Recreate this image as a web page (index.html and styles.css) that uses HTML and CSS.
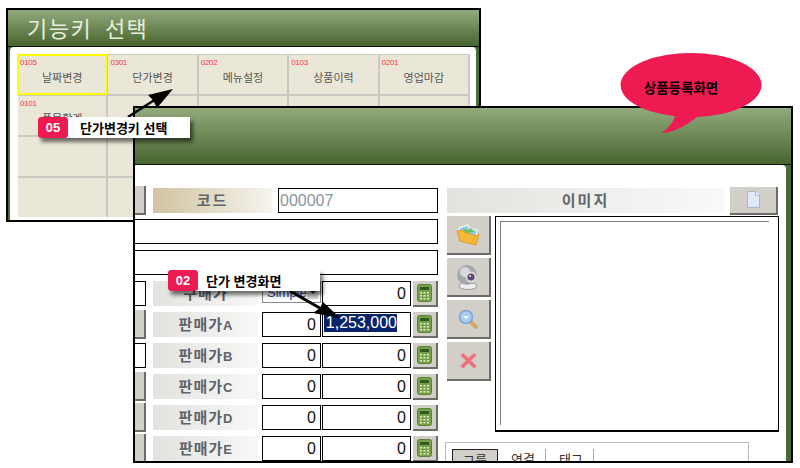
FILE: index.html
```html
<!DOCTYPE html>
<html lang="ko">
<head>
    <meta charset="utf-8">
    <title>단가 변경</title>
    <link rel="stylesheet" href="styles.css">
</head>
<body>
    <svg width="0" height="0" class="defs">
        <symbol id="calc" viewBox="0 0 15 18">
            <rect x="0.5" y="0.5" width="14" height="17" rx="2" fill="#76a04c" stroke="#5c8038"/>
            <rect x="3" y="3" width="9" height="3" fill="#2f5a22"/>
            <path d="M3 8h2v1.6H3zM6.5 8h2v1.6h-2zM10 8h2v1.6h-2zM3 11h2v1.6H3zM6.5 11h2v1.6h-2zM10 11h2v1.6h-2zM3 14h2v1.6H3zM6.5 14h2v1.6h-2zM10 14h2v1.6h-2z" fill="#e2ecc4"/>
        </symbol>
    </svg>

    <!-- 뒤쪽 창 -->
    <div class="window back">
        <div class="win-head"><span class="win-title">기능키 선택</span></div>
        <div class="win-card">
            <div class="key-grid">
                <div class="key-cell on"><span class="key-code">0105</span><span class="key-name">날짜변경</span></div>
                <div class="key-cell"><span class="key-code">0301</span><span class="key-name">단가변경</span></div>
                <div class="key-cell"><span class="key-code">0202</span><span class="key-name">메뉴설정</span></div>
                <div class="key-cell"><span class="key-code">0103</span><span class="key-name">상품이력</span></div>
                <div class="key-cell"><span class="key-code">0201</span><span class="key-name">영업마감</span></div>
                <div class="key-cell"><span class="key-code">0101</span><span class="key-name">품목합계</span></div>
                <div class="key-cell"></div><div class="key-cell"></div><div class="key-cell"></div><div class="key-cell"></div>
                <div class="key-cell"></div><div class="key-cell"></div><div class="key-cell"></div><div class="key-cell"></div><div class="key-cell"></div>
                <div class="key-cell"></div><div class="key-cell"></div><div class="key-cell"></div><div class="key-cell"></div><div class="key-cell"></div>
            </div>
        </div>
    </div>

    <!-- 상품등록 창 -->
    <div class="window front">
        <div class="win-head front-head"></div>
        <div class="win-card front-card">
            <div class="form-col">
                <div class="row">
                    <div class="stub btn"></div>
                    <div class="lbl lbl-code">코드</div>
                    <div class="box code-box">000007</div>
                </div>
                <div class="row"><div class="box full"></div></div>
                <div class="row"><div class="box full"></div></div>
                <div class="row">
                    <div class="stub box"></div>
                    <div class="lbl lbl-price">구매가</div>
                    <div class="select-box"><span>Simple</span><i class="select-arrow"></i></div>
                    <div class="box val">0</div>
                    <div class="calc btn"><svg width="15" height="18"><use href="#calc"/></svg></div>
                </div>
                <div class="row">
                    <div class="stub btn"></div>
                    <div class="lbl lbl-price">판매가<b>A</b></div>
                    <div class="box num">0</div>
                    <div class="box val"><span class="picked">1,253,000</span></div>
                    <div class="calc btn"><svg width="15" height="18"><use href="#calc"/></svg></div>
                </div>
                <div class="row">
                    <div class="stub box"></div>
                    <div class="lbl lbl-price">판매가<b>B</b></div>
                    <div class="box num">0</div>
                    <div class="box val">0</div>
                    <div class="calc btn"><svg width="15" height="18"><use href="#calc"/></svg></div>
                </div>
                <div class="row">
                    <div class="stub btn"></div>
                    <div class="lbl lbl-price">판매가<b>C</b></div>
                    <div class="box num">0</div>
                    <div class="box val">0</div>
                    <div class="calc btn"><svg width="15" height="18"><use href="#calc"/></svg></div>
                </div>
                <div class="row">
                    <div class="stub btn"></div>
                    <div class="lbl lbl-price">판매가<b>D</b></div>
                    <div class="box num">0</div>
                    <div class="box val">0</div>
                    <div class="calc btn"><svg width="15" height="18"><use href="#calc"/></svg></div>
                </div>
                <div class="row">
                    <div class="stub btn"></div>
                    <div class="lbl lbl-price">판매가<b>E</b></div>
                    <div class="box num">0</div>
                    <div class="box val">0</div>
                    <div class="calc btn"><svg width="15" height="18"><use href="#calc"/></svg></div>
                </div>
            </div>

            <div class="image-col">
                <div class="row">
                    <div class="lbl lbl-image">이미지</div>
                    <div class="doc-btn btn">
                        <svg width="13" height="17" viewBox="0 0 13 17"><path d="M.5.5h8l4 4v12H.5z" fill="#dfe9fb" stroke="#a9b6d6"/><path d="M8.5.5v4h4" fill="#f6f8fd" stroke="#a9b6d6"/></svg>
                    </div>
                </div>
                <div class="image-area">
                    <div class="tool-col">
                        <div class="tool btn">
                            <svg width="24" height="24" viewBox="0 0 24 24"><path d="M3 5l9-3 1 3 8 2-1 9H5z" fill="#8fd0e8" stroke="#fff"/><path d="M7 5l5 2 3-2 3 4-9 1z" fill="#6fbf6a"/><path d="M1 8l5-1 2 2 12 4 3-2-3 11L4 18z" fill="#f5b93a" stroke="#e09a22"/></svg>
                        </div>
                        <div class="tool btn">
                            <svg width="24" height="26" viewBox="0 0 24 26"><ellipse cx="12" cy="22" rx="9" ry="3.5" fill="#eee" stroke="#999"/><circle cx="11" cy="11" r="10" fill="#a6a8ab"/><circle cx="9" cy="8" r="5" fill="#d8d9da"/><circle cx="15" cy="13" r="5.5" fill="#ddd"/><circle cx="15" cy="13" r="3.6" fill="#5e4a72"/><circle cx="14" cy="12" r="1" fill="#e8d8f0"/></svg>
                        </div>
                        <div class="tool btn">
                            <svg width="20" height="20" viewBox="0 0 20 20"><path d="M12 12l6 6" stroke="#d5a868" stroke-width="4" stroke-linecap="round"/><circle cx="8" cy="8" r="6.5" fill="#a9cdf0" stroke="#7fa5d0" stroke-width="1.6"/><path d="M5 7l3 3 3-3z" fill="#fff"/></svg>
                        </div>
                        <div class="tool btn">
                            <svg width="17" height="17" viewBox="0 0 17 17"><path d="M3 1l5.500 5L14 1l2.500 2.500L11 8.500l5.500 5.500L14 16.500l-5.500-5.500L3 16.500.5 14 6 8.500.5 3.500z" fill="#ee6f7a" stroke="#d9a0a4" stroke-width=".6"/></svg>
                        </div>
                    </div>
                    <div class="image-box"><div class="image-inner"></div></div>
                </div>
                <div class="tab-panel">
                    <span class="tab active">그룹</span>
                    <span class="tab">연결</span>
                    <span class="tab">태그</span>
                </div>
            </div>
        </div>
    </div>

    <svg class="arrows" width="800" height="468" viewBox="0 0 800 468">
        <path d="M128 117L156 99" stroke="#000" stroke-width="2.500"/>
        <path d="M173 89L148 95 153 100 157 108z" fill="#000"/>
        <path d="M290 291L325 311" stroke="#000" stroke-width="3"/>
        <path d="M340 318L323 302 320 308 313 313z" fill="#000"/>
    </svg>

    <div class="callout call-05"><span class="pill">05</span><span class="call-text">단가변경키 선택</span></div>
    <div class="callout call-02"><span class="pill">02</span><span class="call-text">단가 변경화면</span></div>

    <div class="bubble">
        <svg width="142" height="84" viewBox="0 0 142 84"><path d="M71 1A70 32 0 0 1 77 64.900C68 72 56 80 41 81 48 77 53 71 55 64.200A70 32 0 0 1 71 1z" fill="#ee1a52"/></svg>
        <span class="bubble-text">상품등록화면</span>
    </div>
</body>
</html>
```

FILE: styles.css
```css
body {
    margin: 0;
    height: 468px;
    position: relative;
    overflow: hidden;
    background-color: #fff;
    font-family: "Noto Sans CJK KR", "Liberation Sans", sans-serif;
}

.defs {
    position: absolute;
}

.window {
    position: absolute;
    box-sizing: border-box;
    border: 2px solid #000;
    background-color: #4a6a35;
    display: flex;
    flex-direction: column;
    overflow: hidden;
}

.back {
    left: 6px;
    top: 8px;
    width: 475px;
    height: 214px;
    padding-left: 2px;
    padding-right: 3px;
}

.front {
    left: 133px;
    top: 106px;
    width: 660px;
    height: 357px;
    padding-right: 5px;
}

.win-head {
    height: 36px;
    flex-shrink: 0;
    margin-right: -5px;
    margin-left: -2px;
    padding-left: 19px;
    background: linear-gradient(#93aa7c, #47652f);
    border-bottom: 1px solid #111;
}

.front-head {
    height: 56px;
    margin-left: 0;
}

.win-title {
    font-size: 22px;
    line-height: 34px;
    letter-spacing: 1.5px;
    word-spacing: 5px;
    color: #e8eddc;
}

.win-card {
    flex: 1;
    min-height: 0;
    background-color: #fff;
    border-radius: 4px 4px 0 0;
    padding: 7px 6px 0 8px;
}

.key-grid {
    display: grid;
    grid-template-columns: repeat(5, 1fr);
    grid-auto-rows: 39px;
    gap: 2px;
    padding: 1px 2px 0 0;
    background-color: #cbc8c2;
}

.key-cell {
    position: relative;
    box-sizing: border-box;
    background-color: #ebe7d8;
    text-align: center;
}

.key-cell.on {
    outline: 2px solid #ff0;
    outline-offset: -1px;
}

.key-code {
    position: absolute;
    left: 2px;
    top: 3px;
    font-family: "Liberation Sans", sans-serif;
    font-size: 8px;
    line-height: 10px;
    letter-spacing: -0.3px;
    color: #f5394f;
}

.key-name {
    display: block;
    padding-top: 14px;
    font-size: 11px;
    line-height: 16px;
    color: #555;
}

/* 상품등록 폼 */
.front-card {
    display: flex;
    gap: 9px;
    padding: 23px 0 0;
    border-radius: 0 4px 0 0;
}

.form-col {
    width: 303px;
    display: flex;
    flex-direction: column;
    gap: 6px;
}

.row {
    height: 25px;
    display: flex;
    align-items: center;
}

.box {
    box-sizing: border-box;
    height: 25px;
    border: 1px solid #000;
    background-color: #fff;
    font-family: "Liberation Sans", sans-serif;
    font-size: 16px;
    line-height: 23px;
    color: #111;
}

.btn {
    box-sizing: border-box;
    background-color: #d2cfc8;
    border-right: 2px solid #6d6c68;
    border-bottom: 2px solid #6d6c68;
}

.stub {
    flex-shrink: 0;
    width: 11px;
    margin-right: 7px;
}

.stub.btn {
    height: 29px;
}

.stub.box {
    border-left: none;
}

.lbl {
    height: 25px;
    font-size: 15px;
    font-weight: 700;
    line-height: 24px;
    letter-spacing: 1px;
    text-align: center;
    color: #5f636b;
}

.lbl b {
    font-family: "Liberation Sans", sans-serif;
    font-size: 13px;
    letter-spacing: 0;
}

.lbl-code {
    width: 119px;
    margin-right: 6px;
    background: linear-gradient(to right, #d0c3a0, #f6f4ef);
    letter-spacing: 2px;
}

.lbl-price {
    width: 105px;
    margin-right: 4px;
    background: linear-gradient(to right, #e2e3df, #f8f8f6);
}

.lbl-image {
    width: 277px;
    margin-right: 6px;
    background: linear-gradient(to right, #e2e2de, #f9f9f9);
    letter-spacing: 2px;
}

.code-box {
    width: 160px;
    padding-left: 1px;
    color: #8a93a3;
}

.full {
    width: 303px;
    border-left: none;
}

.num {
    width: 59px;
    margin-right: 1px;
    padding-right: 4px;
    text-align: right;
}

.val {
    width: 89px;
    margin-right: 2px;
    padding-right: 4px;
    text-align: right;
}

.picked {
    display: block;
    margin: 1px 9px 0 1px;
    line-height: 18px;
    background-color: #0a246a;
    color: #fff;
}

.select-box {
    box-sizing: border-box;
    width: 59px;
    height: 22px;
    margin-right: 1px;
    padding: 0 2px 0 4px;
    align-self: flex-start;
    border: 1px solid #888;
    display: flex;
    align-items: center;
    justify-content: space-between;
    font-family: "Liberation Sans", sans-serif;
    font-size: 13px;
    color: #2b3a8c;
}

.select-arrow {
    width: 11px;
    height: 14px;
    background: linear-gradient(#d2cfc8, #d2cfc8);
    position: relative;
}

.select-arrow::after {
    content: "";
    position: absolute;
    left: 2px;
    top: 5px;
    border: 4px solid transparent;
    border-top-color: #222;
    border-bottom: none;
}

.calc {
    width: 25px;
    height: 26px;
    flex-shrink: 0;
    display: flex;
    align-items: center;
    justify-content: center;
}

/* 이미지 영역 */
.image-col {
    width: 332px;
    display: flex;
    flex-direction: column;
}

.doc-btn {
    width: 48px;
    height: 28px;
    display: flex;
    align-items: center;
    justify-content: center;
}

.image-area {
    display: flex;
    gap: 4px;
    margin-top: 3px;
}

.tool-col {
    display: flex;
    flex-direction: column;
    gap: 3px;
}

.tool {
    width: 44px;
    height: 39px;
    display: flex;
    align-items: center;
    justify-content: center;
}

.image-box {
    box-sizing: border-box;
    width: 284px;
    height: 216px;
    padding: 4px 9px 6px 4px;
    border: 1px solid #000;
    border-bottom-width: 2px;
    background-color: #fff;
}

.image-inner {
    height: 100%;
    border-top: 1px solid #808080;
    border-left: 1px solid #808080;
}

.tab-panel {
    box-sizing: border-box;
    width: 304px;
    height: 40px;
    margin: 10px 0 0 -2px;
    padding: 6px 0 0 6px;
    border: 1px solid #bbb;
    display: flex;
    align-items: flex-start;
}

.tab {
    box-sizing: border-box;
    width: 48px;
    height: 24px;
    padding-left: 13px;
    font-size: 13px;
    line-height: 20px;
    color: #333;
    border-right: 1px solid #aaa;
}

.tab.active {
    width: 46px;
    padding-left: 0;
    text-align: center;
    border: 1px solid #222;
    background-color: #d2cfc8;
}

/* 설명 말풍선 */
.arrows {
    position: absolute;
    left: 0;
    top: 0;
}

.callout {
    position: absolute;
    height: 21px;
    display: flex;
    align-items: center;
    background-color: #fff;
    box-shadow: 3px 4px 4px rgba(0, 0, 0, 0.55);
}

.call-05 {
    left: 38px;
    top: 117px;
    width: 152px;
}

.call-02 {
    left: 168px;
    top: 270px;
    width: 152px;
}

.pill {
    width: 30px;
    height: 21px;
    border-radius: 3px;
    background-color: #ee1a52;
    color: #fff;
    font-family: "Liberation Sans", sans-serif;
    font-size: 13px;
    font-weight: 700;
    line-height: 21px;
    text-align: center;
}

.call-text {
    padding-left: 12px;
    font-size: 13px;
    font-weight: 700;
    color: #000;
}

.call-02 .call-text {
    padding-left: 8px;
}

.bubble {
    position: absolute;
    left: 620px;
    top: 52px;
    width: 142px;
    height: 84px;
}

.bubble-text {
    position: absolute;
    left: 0;
    right: 20px;
    top: 26px;
    font-size: 13.5px;
    font-weight: 700;
    line-height: 18px;
    text-align: center;
    color: #000;
}
```
